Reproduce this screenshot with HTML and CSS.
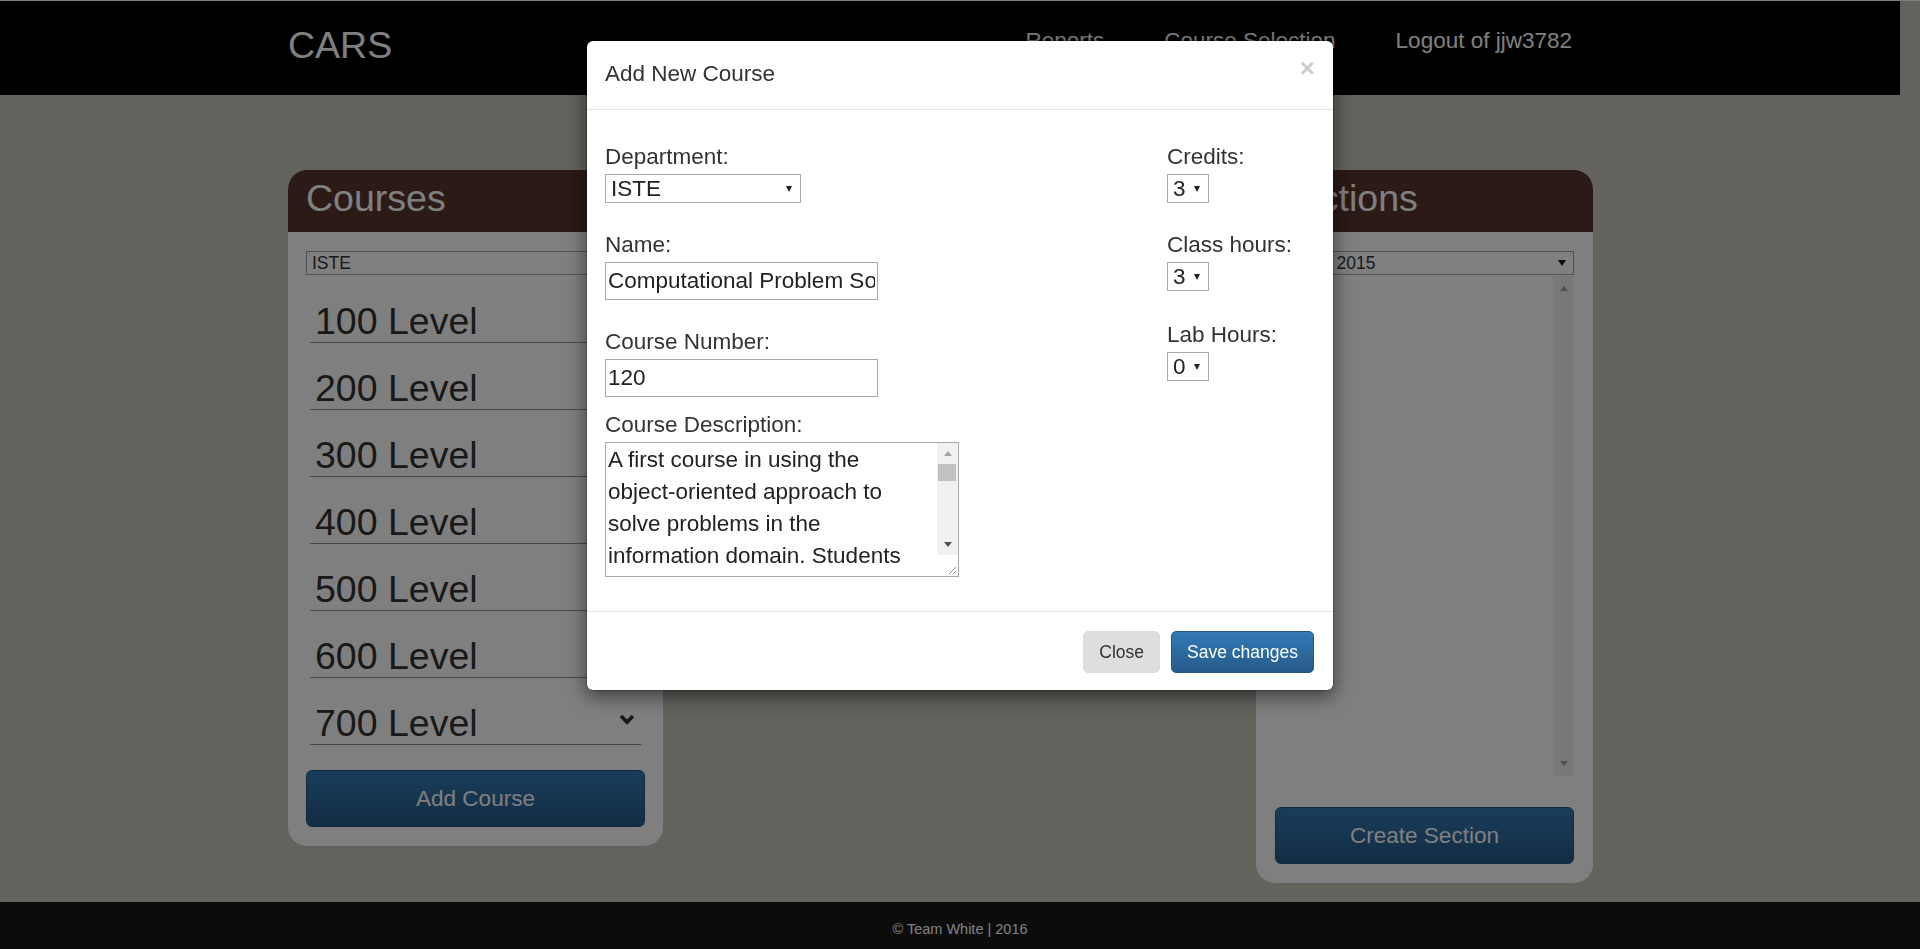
FILE: index.html
```html
<!DOCTYPE html>
<html lang="en">
<head>
<meta charset="utf-8">
<title>CARS</title>
<link rel="stylesheet" href="styles.css">
</head>
<body>
<div class="page">
  <header class="topbar">
    <div class="topbar-inner">
      <a class="brand" href="#">CARS</a>
      <nav class="nav">
        <a href="#">Reports</a>
        <a href="#">Course Selection</a>
        <a href="#">Logout of jjw3782</a>
      </nav>
    </div>
  </header>

  <main class="main">
    <section class="panel panel-courses">
      <h2 class="panel-title">Courses</h2>
      <div class="panel-body">
        <span class="select-wrap select-wrap-panel">
          <select class="panel-select"><option>ISTE</option></select>
        </span>
        <ul class="levels">
          <li class="level">100 Level</li>
          <li class="level">200 Level</li>
          <li class="level">300 Level</li>
          <li class="level">400 Level</li>
          <li class="level">500 Level</li>
          <li class="level">600 Level</li>
          <li class="level">700 Level
            <svg class="chev" width="16" height="11" viewBox="0 0 16 11"><polyline points="2,2 8,8 14,2" fill="none" stroke="#333" stroke-width="3.8"/></svg>
          </li>
        </ul>
        <button class="btn-block">Add Course</button>
      </div>
    </section>

    <section class="panel panel-sections">
      <h2 class="panel-title">Sections</h2>
      <div class="panel-body panel-body-sections">
        <span class="select-wrap select-wrap-panel">
          <select class="panel-select"><option>Spring 2015</option></select>
        </span>
        <div class="listbox">
          <div class="list-track">
            <span class="arrow-up arrow-grey"></span>
            <span class="arrow-down arrow-grey"></span>
          </div>
        </div>
        <button class="btn-block btn-create">Create Section</button>
      </div>
    </section>
  </main>

  <footer class="footer">© Team White | 2016</footer>
</div>

<div class="backdrop"></div>

<div class="modal">
  <div class="modal-dialog">
    <div class="modal-header">
      <h4 class="modal-title">Add New Course</h4>
      <button class="close" type="button">×</button>
    </div>
    <div class="modal-body">
      <div class="col-left">
        <div class="field">
          <label>Department:</label>
          <span class="select-wrap select-wrap-modal">
            <select class="sel sel-dept"><option>ISTE</option></select>
          </span>
        </div>
        <div class="field">
          <label>Name:</label>
          <input class="txt" type="text" value="Computational Problem Solving in the Information Domain I">
        </div>
        <div class="field">
          <label>Course Number:</label>
          <input class="txt" type="text" value="120">
        </div>
        <div class="field field-desc">
          <label>Course Description:</label>
          <div class="ta-wrap">
            <textarea class="ta">A first course in using the object-oriented approach to solve problems in the information domain. Students will learn to design and implement applications using an object-oriented programming language.</textarea>
            <div class="sb">
              <div class="sb-btn"><span class="arrow-up arrow-sb"></span></div>
              <div class="sb-thumb"></div>
              <div class="sb-space"></div>
              <div class="sb-btn"><span class="arrow-down arrow-sb"></span></div>
              <div class="sb-corner">
                <svg width="21" height="21" viewBox="0 0 21 21"><line x1="19" y1="12" x2="12" y2="19" stroke="#8a8a8a" stroke-width="1"/><line x1="19" y1="16" x2="16" y2="19" stroke="#8a8a8a" stroke-width="1"/></svg>
              </div>
            </div>
          </div>
        </div>
      </div>
      <div class="col-right">
        <div class="field">
          <label>Credits:</label>
          <span class="select-wrap select-wrap-modal">
            <select class="sel sel-small"><option>3</option></select>
          </span>
        </div>
        <div class="field">
          <label>Class hours:</label>
          <span class="select-wrap select-wrap-modal">
            <select class="sel sel-small"><option>3</option></select>
          </span>
        </div>
        <div class="field field-lab">
          <label>Lab Hours:</label>
          <span class="select-wrap select-wrap-modal">
            <select class="sel sel-small"><option>0</option></select>
          </span>
        </div>
      </div>
    </div>
    <div class="modal-footer">
      <button class="btn btn-default" type="button">Close</button>
      <button class="btn btn-primary" type="button">Save changes</button>
    </div>
  </div>
</div>
</body>
</html>
```

FILE: styles.css
```css
* { box-sizing: border-box; }

html, body {
  margin: 0;
  padding: 0;
}

body {
  background: #c8c4ba;
  font-family: "Liberation Sans", Arial, sans-serif;
  height: 949px;
  overflow: hidden;
}

.page {
  border-top: 1px solid #ffffff;
}

/* ---------- top bar ---------- */
.topbar {
  background: #000;
  height: 94px;
  margin-right: 20px;
}

.topbar-inner {
  width: 1305px;
  margin-left: 288px;
  padding-top: 24px;
  display: flex;
  justify-content: space-between;
  align-items: flex-start;
}

.brand {
  font-size: 37.5px;
  line-height: 41px;
  color: #fff;
  text-decoration: none;
}

.nav {
  display: flex;
  gap: 60px;
  padding-right: 21px;
}

.nav a {
  font-size: 22.5px;
  line-height: 32px;
  color: #fff;
  text-decoration: none;
}

/* ---------- main ---------- */
.main {
  width: 1305px;
  margin-left: 288px;
  height: 807px;
  padding-top: 75px;
  display: flex;
  justify-content: space-between;
  align-items: flex-start;
}

.panel {
  background: #fff;
  border-radius: 19px;
  overflow: hidden;
}

.panel-courses { width: 375px; }
.panel-sections { width: 337px; }

.panel-title {
  margin: 0;
  background: #56342c;
  color: #fff;
  font-size: 37.5px;
  line-height: 41px;
  font-weight: normal;
  padding: 8px 18px 13px;
}

.panel-body {
  padding: 19px 18px 19px 18px;
}

.panel-body-sections {
  padding: 19px 19px 19px 19px;
}

.select-wrap {
  position: relative;
  display: inline-block;
}

.select-wrap::after {
  content: "";
  position: absolute;
  top: 50%;
  width: 0;
  height: 0;
  pointer-events: none;
}

.select-wrap-panel {
  display: block;
}

.select-wrap-panel::after {
  right: 8px;
  margin-top: -3px;
  border-left: 4px solid transparent;
  border-right: 4px solid transparent;
  border-top: 6px solid #111;
}

.panel-select {
  appearance: none;
  -webkit-appearance: none;
  display: block;
  width: 100%;
  height: 24px;
  margin: 0;
  border: 1px solid #a9a9a9;
  border-radius: 0;
  background: #fff;
  color: #333;
  font-family: inherit;
  font-size: 17.5px;
  padding: 0 5px;
}

.levels {
  list-style: none;
  margin: 1px 4px 0;
  padding: 0;
}

.level {
  display: flex;
  align-items: flex-start;
  padding: 24px 6px 0 5px;
  font-size: 37.5px;
  line-height: 42px;
  color: #333;
  border-bottom: 1px solid #939393;
}

.chev {
  margin-left: auto;
  margin-top: 12px;
}

.btn-block {
  display: block;
  width: 100%;
  height: 57px;
  margin-top: 25px;
  border: 1px solid #245580;
  border-radius: 6px;
  background: linear-gradient(#337ab7, #265a88);
  color: #fff;
  font-family: inherit;
  font-size: 22.5px;
  padding: 0;
}

.listbox {
  margin-top: 1px;
  height: 500px;
  display: flex;
  justify-content: flex-end;
}

.list-track {
  width: 21px;
  background: #f1f1f1;
  display: flex;
  flex-direction: column;
  justify-content: space-between;
  align-items: center;
  padding: 10px 0;
}

.arrow-up, .arrow-down {
  display: block;
  width: 0;
  height: 0;
  border-left: 4.5px solid transparent;
  border-right: 4.5px solid transparent;
}

.arrow-grey.arrow-up { border-bottom: 5px solid #a3a3a3; }
.arrow-grey.arrow-down { border-top: 5px solid #a3a3a3; }

.btn-create {
  margin-top: 31px;
}

/* ---------- footer ---------- */
.footer {
  background: #181818;
  color: #fff;
  text-align: center;
  font-size: 14.5px;
  line-height: 20px;
  height: 47px;
  padding-top: 17px;
}

/* ---------- modal ---------- */
.backdrop {
  position: fixed;
  inset: 0;
  background: rgba(0, 0, 0, 0.5);
  z-index: 10;
}

.modal {
  position: fixed;
  inset: 0;
  z-index: 20;
}

.modal-dialog {
  width: 748px;
  margin: 40px auto 0;
  background: #fff;
  border: 1px solid rgba(0, 0, 0, 0.2);
  background-clip: padding-box;
  border-radius: 7px;
  box-shadow: 0 6px 19px rgba(0, 0, 0, 0.5);
}

.modal-header {
  display: flex;
  justify-content: space-between;
  align-items: flex-start;
  padding: 17px 18px 19px;
  border-bottom: 1px solid #e5e5e5;
}

.modal-title {
  margin: 0;
  font-size: 22.5px;
  line-height: 32px;
  font-weight: normal;
  color: #333;
}

.close {
  margin-top: -3px;
  padding: 0;
  border: 0;
  background: transparent;
  font-family: inherit;
  font-size: 26px;
  font-weight: bold;
  line-height: 1;
  color: #000;
  opacity: 0.2;
  text-shadow: 0 1px 0 #fff;
}

.modal-body {
  display: grid;
  grid-template-columns: 1fr 148px;
  padding: 31px 18px 34px;
}

.field label {
  display: block;
  font-size: 22.5px;
  line-height: 32px;
  color: #333;
}

.field + .field { margin-top: 26px; }
.field-desc { margin-top: 12px !important; }
.field-lab { margin-top: 28px !important; }

.select-wrap-modal {
  margin-top: 1px;
}

.select-wrap-modal::after {
  right: 9px;
  margin-top: -3px;
  border-left: 3.5px solid transparent;
  border-right: 3.5px solid transparent;
  border-top: 6px solid #222;
}

.sel {
  appearance: none;
  -webkit-appearance: none;
  display: block;
  height: 29px;
  margin: 0;
  border: 1px solid #a9a9a9;
  border-radius: 0;
  background: #fff;
  color: #222;
  font-family: inherit;
  font-size: 22.5px;
  padding: 0 5px;
}

.sel-dept { width: 196px; }
.sel-small { width: 42px; }

.txt {
  display: block;
  width: 273px;
  height: 38px;
  margin: 1px 0 0;
  border: 1px solid #a9a9a9;
  padding: 0 2px;
  font-family: inherit;
  font-size: 22.5px;
  color: #222;
  background: #fff;
}

.ta-wrap {
  display: flex;
  width: 354px;
  height: 135px;
  margin-top: 1px;
  border: 1px solid #a9a9a9;
}

.ta {
  flex: 1;
  min-width: 0;
  margin: 0;
  border: 0;
  outline: none;
  resize: none;
  overflow: hidden;
  padding: 1px 4px 1px 2px;
  font-family: inherit;
  font-size: 22.5px;
  line-height: 32px;
  color: #222;
  background: #fff;
}

.sb {
  width: 21px;
  display: flex;
  flex-direction: column;
  background: #f1f1f1;
}

.sb-btn {
  height: 21px;
  display: flex;
  align-items: center;
  justify-content: center;
}

.arrow-sb.arrow-up { border-bottom: 5px solid #a3a3a3; }
.arrow-sb.arrow-down { border-top: 5px solid #505050; }

.sb-thumb {
  height: 17px;
  margin: 0 2px 0 1px;
  background: #c1c1c1;
}

.sb-space { flex: 1; }

.sb-corner {
  height: 21px;
  background: #fff;
}

.sb-corner svg { display: block; }

.modal-footer {
  display: flex;
  justify-content: flex-end;
  gap: 11px;
  padding: 19px 19px 17px;
  border-top: 1px solid #e5e5e5;
}

.btn {
  font-family: inherit;
  font-size: 17.5px;
  line-height: 25px;
  padding: 7.5px 15px;
  border-radius: 5px;
  margin: 0;
}

.btn-default {
  background: #dedede;
  border: 1px solid #dcdcdc;
  color: #333;
}

.btn-primary {
  background: linear-gradient(#337ab7, #265a88);
  border: 1px solid #245580;
  color: #fff;
}
```
